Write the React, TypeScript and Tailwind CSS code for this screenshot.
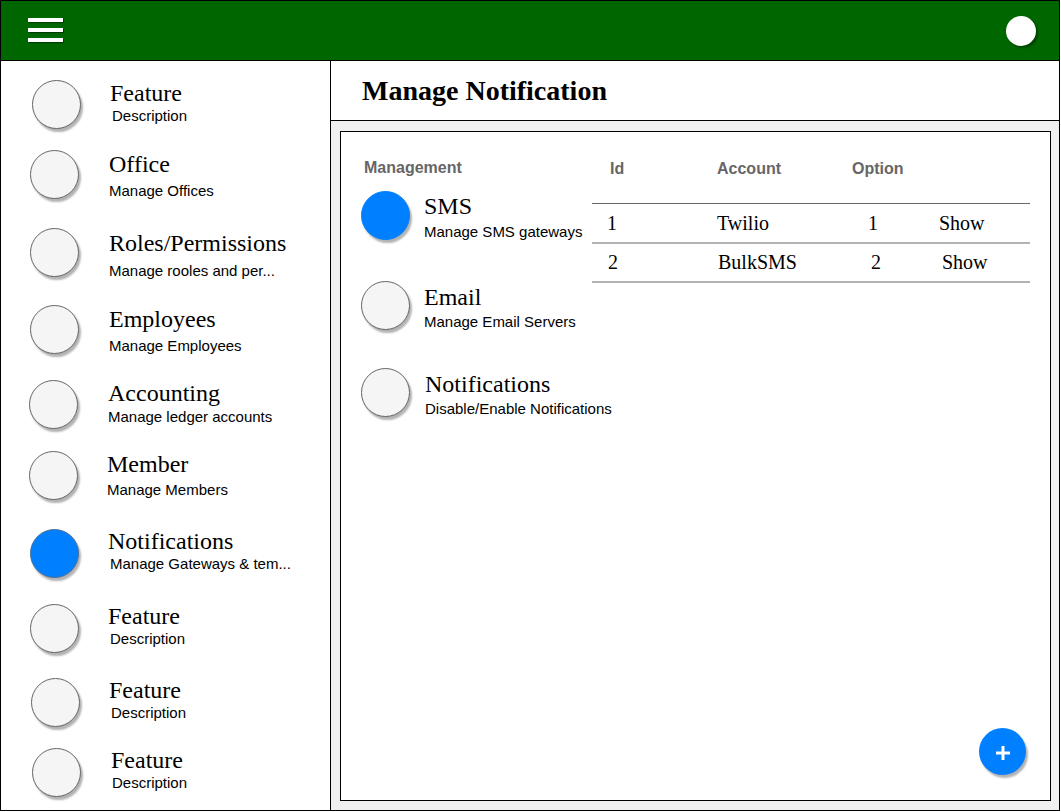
import React from "react";

type Item = {
  title: string;
  desc: string;
  blue?: boolean;
  wrap: string;
  circle: string;
  col: string;
  title_: string;
  desc_: string;
};

const items: Item[] = [
  { title: "Feature", desc: "Description", wrap: "h-[70px]", circle: "ml-[31px]", col: "ml-[29px]", title_: "mt-[2px]", desc_: "mt-0 ml-[2px]" },
  { title: "Office", desc: "Manage Offices", wrap: "h-[78px]", circle: "ml-[29px]", col: "ml-[30px]", title_: "mt-[3px]", desc_: "mt-[4px] ml-0" },
  { title: "Roles/Permissions", desc: "Manage rooles and per...", wrap: "h-[77px]", circle: "ml-[29px]", col: "ml-[30px]", title_: "mt-[4px]", desc_: "mt-[5px] ml-0" },
  { title: "Employees", desc: "Manage Employees", wrap: "h-[75px]", circle: "ml-[29px]", col: "ml-[30px]", title_: "mt-[3px]", desc_: "mt-[4px] ml-0" },
  { title: "Accounting", desc: "Manage ledger accounts", wrap: "h-[71px]", circle: "ml-[28px]", col: "ml-[30px]", title_: "mt-[2px]", desc_: "mt-[1px] ml-0" },
  { title: "Member", desc: "Manage Members", wrap: "h-[78px]", circle: "ml-[28px]", col: "ml-[29px]", title_: "mt-[2px]", desc_: "mt-[3px] ml-0" },
  { title: "Notifications", desc: "Manage Gateways & tem...", blue: true, wrap: "h-[75px]", circle: "ml-[29px]", col: "ml-[29px]", title_: "mt-[1px]", desc_: "mt-0 ml-[2px]" },
  { title: "Feature", desc: "Description", wrap: "h-[74px]", circle: "ml-[29px]", col: "ml-[29px]", title_: "mt-[1px]", desc_: "mt-0 ml-[2px]" },
  { title: "Feature", desc: "Description", wrap: "h-[70px]", circle: "ml-[30px]", col: "ml-[29px]", title_: "mt-[1px]", desc_: "mt-0 ml-[2px]" },
  { title: "Feature", desc: "Description", wrap: "h-[60px]", circle: "ml-[31px]", col: "ml-[30px]", title_: "mt-[1px]", desc_: "mt-0 ml-[1px]" },
];

const serif = "font-['Liberation_Serif',serif]";
const sans = "font-['Liberation_Sans',Arial,sans-serif]";

function Circle({ blue, edge }: { blue?: boolean; edge?: boolean }) {
  if (blue) {
    return (
      <div
        className={
          "w-[49px] h-[49px] shrink-0 rounded-full bg-[#007fff] shadow-[2px_3px_2px_rgba(0,0,0,0.3)] border " +
          (edge ? "border-[#4d6f94]" : "border-[#007fff]")
        }
      />
    );
  }
  return (
    <div className="w-[49px] h-[49px] shrink-0 rounded-full bg-[#f5f5f5] border border-[#666666] shadow-[2px_3px_2px_rgba(0,0,0,0.3)]" />
  );
}

function SideItem({ it }: { it: Item }) {
  return (
    <div className={"flex items-start shrink-0 " + it.wrap}>
      <div className={"mt-[3px] " + it.circle}>
        <Circle blue={it.blue} edge />
      </div>
      <div className={"flex flex-col " + it.col}>
        <div className={serif + " text-[24px] leading-[28px] text-black whitespace-nowrap " + it.title_}>{it.title}</div>
        <div className={sans + " text-[15px] leading-[17px] text-black whitespace-nowrap " + it.desc_}>{it.desc}</div>
      </div>
    </div>
  );
}

function MgmtItem({
  title,
  desc,
  blue,
  wrap,
  titleMt,
  descMt,
  colMl,
}: {
  title: string;
  desc: string;
  blue?: boolean;
  wrap: string;
  titleMt: string;
  descMt: string;
  colMl: string;
}) {
  return (
    <div className={"flex items-start ml-[20px] " + wrap}>
      <Circle blue={blue} />
      <div className={"flex flex-col " + colMl}>
        <div className={serif + " text-[24px] leading-[28px] text-black whitespace-nowrap " + titleMt}>{title}</div>
        <div className={sans + " text-[15px] leading-[17px] text-black whitespace-nowrap " + descMt}>{desc}</div>
      </div>
    </div>
  );
}

export default function App() {
  return (
    <div className="w-[1061px] h-[812px] bg-white">
      <div className="w-[1060px] h-[811px] border border-black flex flex-col bg-white overflow-hidden">
        {/* Top bar */}
        <div className="h-[60px] shrink-0 bg-[#006600] border-b border-black flex items-center justify-between pl-[27px] pr-[23px]">
          <div className="flex flex-col gap-[6px] -mt-[1px]">
            <div className="w-[35px] h-[4px] bg-white shadow-[1px_1px_1px_rgba(0,0,0,0.45)]" />
            <div className="w-[35px] h-[4px] bg-white shadow-[1px_1px_1px_rgba(0,0,0,0.45)]" />
            <div className="w-[35px] h-[4px] bg-white shadow-[1px_1px_1px_rgba(0,0,0,0.45)]" />
          </div>
          <div className="w-[30px] h-[30px] rounded-full bg-white shadow-[2px_2px_2px_rgba(0,0,0,0.35)]" />
        </div>

        <div className="flex flex-1 min-h-0">
          {/* Sidebar */}
          <div className="w-[330px] shrink-0 border-r border-black bg-white pt-[16px] flex flex-col overflow-hidden">
            {items.map((it, i) => (
              <SideItem key={i} it={it} />
            ))}
          </div>

          {/* Main */}
          <div className="flex-1 flex flex-col bg-[#f0f0f0] min-w-0">
            <div className="h-[60px] shrink-0 bg-white border-b border-black pl-[31px] pt-[14px]">
              <div className={serif + " font-bold text-[28px] leading-[32px] text-black"}>Manage Notification</div>
            </div>
            <div className="flex-1 flex flex-col pt-[10px] pl-[9px] pr-[8px] pb-[9px] min-h-0">
              <div className="relative flex-1 bg-white border border-black flex">
                {/* Management column */}
                <div className="w-[251px] shrink-0 flex flex-col pt-[27px]">
                  <div className={sans + " font-bold text-[16px] leading-[18px] text-[#666666] pl-[23px]"}>Management</div>
                  <div className="h-[14px]" />
                  <MgmtItem title="SMS" desc="Manage SMS gateways" blue wrap="h-[49px]" titleMt="mt-[1px]" descMt="mt-[3px]" colMl="ml-[14px]" />
                  <div className="h-[41px]" />
                  <MgmtItem title="Email" desc="Manage Email Servers" wrap="h-[49px]" titleMt="mt-[2px]" descMt="mt-[2px]" colMl="ml-[14px]" />
                  <div className="h-[38px]" />
                  <MgmtItem title="Notifications" desc="Disable/Enable Notifications" wrap="h-[49px]" titleMt="mt-[2px]" descMt="mt-[2px]" colMl="ml-[15px]" />
                </div>

                {/* Table column */}
                <div className="w-[438px] shrink-0 flex flex-col pt-[28px]">
                  <div className={sans + " font-bold text-[16px] leading-[18px] text-[#666666] flex pl-[18px]"}>
                    <span className="w-[107px]">Id</span>
                    <span className="w-[135px]">Account</span>
                    <span>Option</span>
                  </div>
                  <div className="mt-[25px] border-t border-[#666666]" />
                  <div className={serif + " text-[20px] leading-[24px] text-black h-[40px] border-b-2 border-[#b3b3b3] flex pt-[7px] pl-[15px]"}>
                    <span className="w-[110px]">1</span>
                    <span className="w-[151px]">Twilio</span>
                    <span className="w-[71px]">1</span>
                    <span>Show</span>
                  </div>
                  <div className={serif + " text-[20px] leading-[24px] text-black h-[39px] border-b-2 border-[#b3b3b3] flex pt-[6px] pl-[16px]"}>
                    <span className="w-[110px]">2</span>
                    <span className="w-[153px]">BulkSMS</span>
                    <span className="w-[71px]">2</span>
                    <span>Show</span>
                  </div>
                </div>

                {/* FAB */}
                <div className="absolute right-[24px] bottom-[25px] w-[47px] h-[47px] rounded-full bg-[#007fff] shadow-[2px_3px_2px_rgba(0,0,0,0.3)] flex items-center justify-center">
                  <svg width="14" height="14" viewBox="0 0 14 14" className="mt-[2px]">
                    <rect x="5.5" y="0" width="3" height="14" fill="#ffffff" />
                    <rect x="0" y="5.5" width="14" height="3" fill="#ffffff" />
                  </svg>
                </div>
              </div>
            </div>
          </div>
        </div>
      </div>
    </div>
  );
}
